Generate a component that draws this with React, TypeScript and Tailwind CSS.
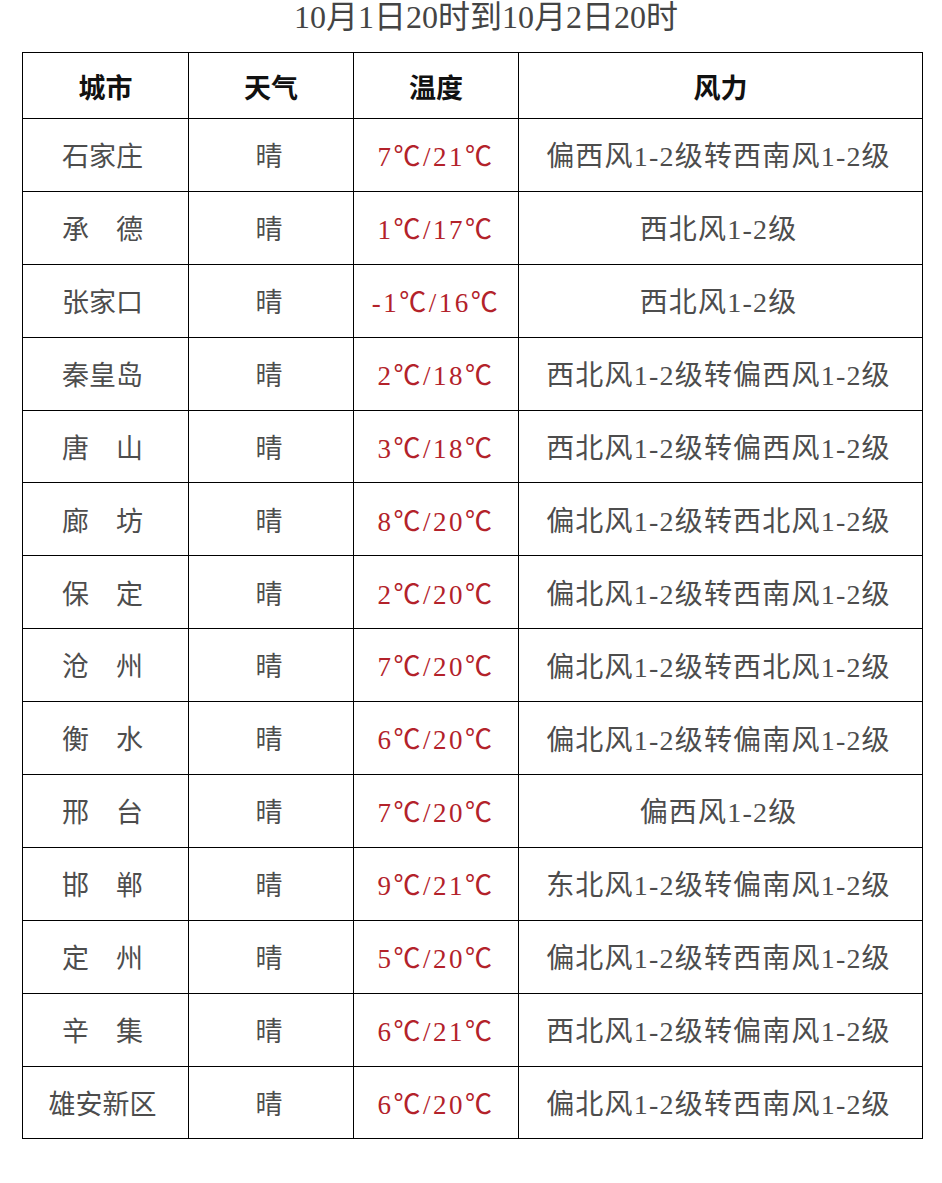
const ROWS: [string, string, string][] = [
  ["石家庄", "7℃/21℃", "偏西风1-2级转西南风1-2级"],
  ["承　德", "1℃/17℃", "西北风1-2级"],
  ["张家口", "-1℃/16℃", "西北风1-2级"],
  ["秦皇岛", "2℃/18℃", "西北风1-2级转偏西风1-2级"],
  ["唐　山", "3℃/18℃", "西北风1-2级转偏西风1-2级"],
  ["廊　坊", "8℃/20℃", "偏北风1-2级转西北风1-2级"],
  ["保　定", "2℃/20℃", "偏北风1-2级转西南风1-2级"],
  ["沧　州", "7℃/20℃", "偏北风1-2级转西北风1-2级"],
  ["衡　水", "6℃/20℃", "偏北风1-2级转偏南风1-2级"],
  ["邢　台", "7℃/20℃", "偏西风1-2级"],
  ["邯　郸", "9℃/21℃", "东北风1-2级转偏南风1-2级"],
  ["定　州", "5℃/20℃", "偏北风1-2级转西南风1-2级"],
  ["辛　集", "6℃/21℃", "西北风1-2级转偏南风1-2级"],
  ["雄安新区", "6℃/20℃", "偏北风1-2级转西南风1-2级"],
];

const FONT = "font-['Liberation_Serif','Noto_Sans_CJK_SC',serif]";

export default function App() {
  return (
    <div className={`h-[1183px] w-[942px] bg-white ${FONT}`}>
      <div className="flex h-[52px] justify-center pl-[30px]">
        <h1 className="text-[32px] leading-[35px] text-[#444]">10月1日20时到10月2日20时</h1>
      </div>
      <table className="ml-[22px] w-[901px] table-fixed border-collapse">
        <colgroup>
          <col className="w-[166px]" />
          <col className="w-[165px]" />
          <col className="w-[165px]" />
          <col />
        </colgroup>
        <thead>
          <tr className="h-[66px]">
            {["城市", "天气", "温度", "风力"].map((h) => (
              <th key={h} className="border border-black pt-[7px] text-center text-[27px] font-bold text-[#111]">
                {h}
              </th>
            ))}
          </tr>
        </thead>
        <tbody>
          {ROWS.map(([city, temp, wind]) => (
            <tr key={city} className="h-[72.9px]">
              <td className="border border-black pt-[5px] pr-[6px] text-center text-[27px] text-[#4d4d4d]">{city}</td>
              <td className="border border-black pt-[5px] pr-[4px] text-center text-[27px] text-[#4d4d4d]">晴</td>
              <td className="border border-black pt-[5px] text-center text-[27px] tracking-[2.5px] text-[#b3222a]">{temp}</td>
              <td className="border border-black pt-[5px] pr-[4px] text-center text-[28px] tracking-[1.2px] text-[#4d4d4d]">{wind}</td>
            </tr>
          ))}
        </tbody>
      </table>
    </div>
  );
}
